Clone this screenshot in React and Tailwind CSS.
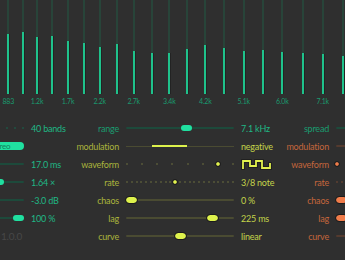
import React from "react";

const BARS = [
  [8.3, 33.7], [22.7, 32.3], [37, 37.3], [52.3, 35.7], [68, 41], [83.7, 43], [99.7, 47],
  [116.7, 43.7], [133.7, 51.3], [151.7, 53], [169.3, 52.7], [187, 49], [205.3, 45],
  [224.3, 47.7], [243.7, 51], [263, 49.7], [282.3, 51.7], [302.7, 53], [322.7, 53.7], [343, 55.7],
];
const LABELS = ["883", "1.2k", "1.7k", "2.2k", "2.7k", "3.4k", "4.2k", "5.1k", "6.0k", "7.1k"];

function Spectrum() {
  return (
    <svg width="345" height="119" viewBox="0 0 345 119" className="block">
      {BARS.map(([x, top], i) => {
        const bx = Math.round(x - 1);
        const t = Math.round(top);
        return (
          <g key={i}>
            <rect x={bx} y={0} width={2} height={t} fill="#284439" />
            <rect x={bx} y={t} width={2} height={94 - t} fill="#1fc28b" />
            <rect x={bx + 2} y={t} width={1} height={94 - t} fill="#232323" />
          </g>
        );
      })}
      {LABELS.map((l, i) => (
        <text
          key={l}
          x={BARS[i * 2][0]}
          y={104}
          textAnchor="middle"
          fontSize="7"
          fontFamily="Lato, sans-serif"
          fill="#1a9a6e"
        >
          {l}
        </text>
      ))}
    </svg>
  );
}

const T = {
  green: {
    label: "text-[#1a9c70]",
    track: "bg-[#1d4a3b]",
    thumb: "bg-[#20e0a0]",
    value: "text-[#1fb886]",
    dot: "bg-[#1f5444]",
    dotOn: "bg-[#20e0a0]",
  },
  yellow: {
    label: "text-[#aab43c]",
    track: "bg-[#4a4b32]",
    thumb: "bg-[#def24c]",
    value: "text-[#c4d44a]",
    dot: "bg-[#57583a]",
    dotOn: "bg-[#e2f24e]",
  },
  orange: {
    label: "text-[#c4663c]",
    track: "bg-[#543a2e]",
    thumb: "bg-[#f07c4a]",
    value: "text-[#d07040]",
    dot: "bg-[#5e4032]",
    dotOn: "bg-[#f07c4a]",
  },
};

function Thumb({ t, pos, outline }) {
  return (
    <div
      className={`absolute top-1/2 -translate-y-1/2 w-[11px] h-[6px] rounded-full ${t.thumb} ${
        outline ? "outline outline-1 outline-[#1c1c1c]" : ""
      }`}
      style={{ left: `${pos * 97}px` }}
    />
  );
}

function Slider({ t, pos, outline }) {
  return (
    <div className="relative w-[108px] h-[18px] flex items-center">
      <div className={`w-full h-[2px] rounded-full ${t.track}`} />
      {pos !== undefined && <Thumb t={t} pos={pos} outline={outline} />}
    </div>
  );
}

function Range({ t, from, to }) {
  return (
    <div className="relative w-[108px] h-[18px] flex items-center">
      <div className={`w-full h-[1px] ${t.track}`} />
      <div
        className={`absolute top-1/2 -translate-y-1/2 h-[2px] ${t.thumb}`}
        style={{ left: `${from}px`, width: `${to - from}px` }}
      />
    </div>
  );
}

function Dots({ t, n, sel }) {
  return (
    <div className="w-[108px] h-[18px] flex items-center justify-between">
      {Array.from({ length: n }).map((_, i) => (
        <div key={i} className="w-[2px] h-[2px] flex items-center justify-center">
          {i === sel ? (
            <div className={`shrink-0 w-[4px] h-[4px] rounded-full ${t.dotOn} outline outline-1 outline-[#1c1c1c]`} />
          ) : (
            <div className={`shrink-0 w-[2px] h-[2px] rounded-full ${t.dot}`} />
          )}
        </div>
      ))}
    </div>
  );
}

function Segmented({ t }) {
  return (
    <div className="relative w-[108px] h-[18px] flex items-center">
      <div className={`w-full h-[8px] rounded-full ${t.track} flex`}>
        <div className="w-[60px] flex items-center justify-center text-[8px] leading-none text-[#1fb886]">mono</div>
        <div className={`w-[48px] rounded-full ${t.thumb} flex items-center justify-center text-[8px] leading-none text-[#13805c]`}>
          stereo
        </div>
      </div>
    </div>
  );
}

function Wave() {
  const d = "M2 9 V2 H9 V7 H15 V2 H21 V9 H29 V5";
  return (
    <svg width="32" height="11" viewBox="0 0 32 11" className="block">
      <path d={d} fill="none" stroke="#1c1c1c" strokeWidth="3.6" strokeLinejoin="miter" strokeLinecap="square" />
      <path d={d} fill="none" stroke="#e2f24e" strokeWidth="1.8" strokeLinejoin="miter" strokeLinecap="square" />
    </svg>
  );
}

function Row({ label, labelT, control, value, valueT }) {
  return (
    <div className="flex items-center h-[18px]">
      <div className={`w-[56px] text-right whitespace-nowrap ${labelT.label}`}>{label}</div>
      <div className="w-[7px]" />
      {control}
      <div className="w-[7px]" />
      <div className={`w-[32px] whitespace-nowrap ${valueT.value}`}>{value}</div>
    </div>
  );
}

function Column({ rows }) {
  return (
    <div className="flex flex-col w-[210px] shrink-0">
      {rows.map((r, i) => (
        <Row key={i} {...r} />
      ))}
    </div>
  );
}

export default function App() {
  const G = T.green, Y = T.yellow, O = T.orange;
  const colA = [
    { label: "bands", labelT: G, valueT: G, control: <Dots t={G} n={14} sel={-1} />, value: "40 bands" },
    { label: "channels", labelT: G, valueT: G, control: <Segmented t={G} />, value: "" },
    { label: "attack", labelT: G, valueT: G, control: <Slider t={G} pos={0.2} />, value: "17.0 ms" },
    { label: "ratio", labelT: G, valueT: G, control: <Slider t={G} pos={0.79} />, value: "1.64 ×" },
    { label: "gain", labelT: G, valueT: G, control: <Slider t={G} pos={0.3} />, value: "-3.0 dB" },
    { label: "mix", labelT: G, valueT: G, control: <Slider t={G} pos={1} />, value: "100 %" },
    {
      label: "",
      labelT: G,
      valueT: G,
      control: (
        <div className="w-[108px] h-[18px] flex items-center justify-end pr-[2px] text-[#474747] text-[10px]">1.0.0</div>
      ),
      value: "",
    },
  ];
  const colB = [
    { label: "range", labelT: G, valueT: G, control: <Slider t={G} pos={0.567} />, value: "7.1 kHz" },
    { label: "modulation", labelT: Y, valueT: Y, control: <Range t={Y} from={26} to={61} />, value: "negative" },
    { label: "waveform", labelT: Y, valueT: Y, control: <Dots t={Y} n={8} sel={6} />, value: <Wave /> },
    { label: "rate", labelT: Y, valueT: Y, control: <Dots t={Y} n={23} sel={10} />, value: "3/8 note" },
    { label: "chaos", labelT: Y, valueT: Y, control: <Slider t={Y} pos={0} outline />, value: "0 %" },
    { label: "lag", labelT: Y, valueT: Y, control: <Slider t={Y} pos={0.83} outline />, value: "225 ms" },
    { label: "curve", labelT: Y, valueT: Y, control: <Slider t={Y} pos={0.5} outline />, value: "linear" },
  ];
  const colC = [
    { label: "spread", labelT: G, valueT: G, control: <Slider t={G} />, value: "" },
    { label: "modulation", labelT: O, valueT: O, control: <Slider t={O} />, value: "" },
    { label: "waveform", labelT: O, valueT: O, control: <Dots t={O} n={8} sel={0} />, value: "" },
    { label: "rate", labelT: O, valueT: O, control: <Dots t={O} n={23} sel={-1} />, value: "" },
    { label: "chaos", labelT: O, valueT: O, control: <Slider t={O} pos={0} outline />, value: "" },
    { label: "lag", labelT: O, valueT: O, control: <Slider t={O} pos={0} outline />, value: "" },
    { label: "curve", labelT: O, valueT: O, control: <Slider t={O} />, value: "" },
  ];
  return (
    <div
      className="w-[345px] h-[260px] overflow-hidden bg-[#2f2f2f] text-[9px] leading-none tracking-[-0.2px]"
      style={{ fontFamily: "Lato, 'Noto Sans', sans-serif" }}
    >
      <Spectrum />
      <div className="flex ml-[-147px]">
        <Column rows={colA} />
        <Column rows={colB} />
        <Column rows={colC} />
      </div>
    </div>
  );
}
